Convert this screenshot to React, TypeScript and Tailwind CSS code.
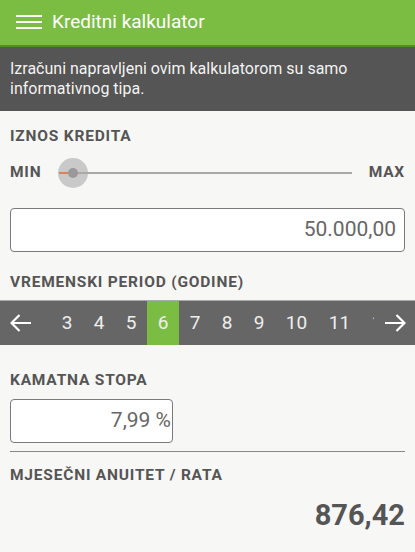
import React from "react";

const years = [3, 4, 5, 6, 7, 8, 9, 10, 11, 12, 13];

function Arrow({ dir }: { dir: "left" | "right" }) {
  return (
    <svg
      width="21"
      height="18"
      viewBox="0 0 21 18"
      fill="none"
      stroke="#ffffff"
      strokeWidth="2.2"
      className={dir === "right" ? "rotate-180" : ""}
    >
      <path d="M1.5 9H21M9.5 1L1.5 9L9.5 17" />
    </svg>
  );
}

function Label({ children }: { children: React.ReactNode }) {
  return (
    <div className="px-[10px] text-[15.5px] font-bold text-[#555555] leading-[20px] tracking-[0.8px]">
      {children}
    </div>
  );
}

export default function App() {
  return (
    <div className="w-[415px] h-[552px] overflow-hidden bg-[#f7f7f5] font-['Roboto',sans-serif]">
      <header className="h-[47px] bg-[#7bbd42] border-b-2 border-[#4f8c2b] flex items-center pb-[2px]">
        <div className="ml-[16px] w-[26px] flex flex-col gap-[4px]">
          <span className="block h-[2px] bg-white/95" />
          <span className="block h-[2px] bg-white/95" />
          <span className="block h-[2px] bg-white/95" />
        </div>
        <h1 className="ml-[10px] text-[19px] text-white leading-none">Kreditni kalkulator</h1>
      </header>

      <div className="bg-[#555555] px-[10px] pt-[12px] pb-[12px] h-[64px] text-[16px] leading-[20px] text-white/95">
        Izračuni napravljeni ovim kalkulatorom su samo informativnog tipa.
      </div>

      <div className="pt-[15px]">
        <Label>IZNOS KREDITA</Label>
      </div>

      <div className="mt-[11px] px-[10px] flex items-center h-[32px]">
        <span className="text-[15.5px] font-bold tracking-[0.8px] text-[#555555] w-[49px]">MIN</span>
        <div className="relative h-[32px] w-[293px]">
          <div className="absolute left-[-1px] top-[1px] w-[30px] h-[30px] rounded-full bg-[#c9c9c9]" />
          <div className="absolute left-0 top-[15px] h-[2px] w-[10px] bg-[#d8845a]" />
          <div className="absolute left-[14px] right-0 top-[15px] h-[2px] bg-[#a9a9a9]" />
          <div className="absolute left-[9px] top-[11px] w-[10px] h-[10px] rounded-full bg-[#999999]" />
        </div>
        <span className="ml-auto text-[15.5px] font-bold tracking-[0.8px] text-[#555555]">MAX</span>
      </div>

      <div className="mt-[19px] mx-[10px] h-[44px] border border-[#7a7a7a] rounded-[4px] bg-white flex items-center justify-end pr-[8px] text-[21px] text-[#666666]">
        50.000,00
      </div>

      <div className="mt-[20px]">
        <Label>VREMENSKI PERIOD (GODINE)</Label>
      </div>

      <div className="mt-[8px] h-[45px] bg-[#666666] border-t border-[#aaaaaa] flex items-stretch">
        <div className="w-[51px] flex items-center pl-[10px]">
          <Arrow dir="left" />
        </div>
        <div className="flex-1 overflow-hidden flex">
          {years.map((y) => (
            <div
              key={y}
              className={`shrink-0 flex items-center justify-center text-[19px] text-[#eeeeee] ${
                y > 9 ? "w-[43px]" : "w-[32px]"
              } ${y === 6 ? "bg-[#7bbd42]" : ""}`}
            >
              {y}
            </div>
          ))}
        </div>
        <div className="w-[41px] flex items-center justify-end pr-[9px]">
          <Arrow dir="right" />
        </div>
      </div>

      <div className="mt-[25px]">
        <Label>KAMATNA STOPA</Label>
      </div>

      <div className="mt-[9px] ml-[10px] w-[163px] h-[44px] border border-[#7a7a7a] rounded-[4px] bg-white flex items-center justify-end pr-[1px] text-[21px] text-[#666666]">
        7,99 %
      </div>

      <div className="mt-[8px] mx-[10px] h-[1px] bg-[#888888]" />

      <div className="mt-[13px]">
        <Label>MJESEČNI ANUITET / RATA</Label>
      </div>

      <div className="mt-[12px] px-[10px] text-right text-[29px] font-bold text-[#555555] leading-[36px]">
        876,42
      </div>
    </div>
  );
}
